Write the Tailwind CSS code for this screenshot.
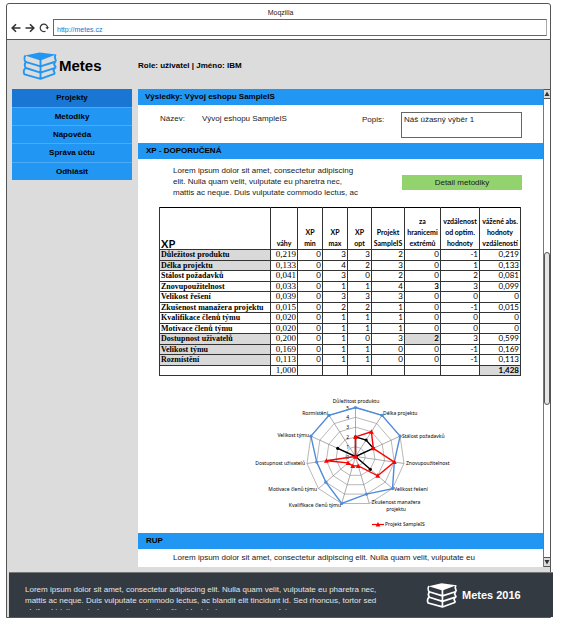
<!DOCTYPE html>
<html lang="cs">
<head>
<meta charset="utf-8">
<meta name="viewport" content="width=device-width, initial-scale=1">
<title>Metes – Výsledky</title>
<script src="https://cdn.jsdelivr.net/npm/@tailwindcss/browser@4"></script>
</head>
<body class="bg-white pl-[6px] pr-[10px] pt-[3px] font-['Liberation_Sans',sans-serif] text-[8px] leading-[11px] text-[#1a1a1a]">
<svg class="hidden" aria-hidden="true">
  <symbol id="books" viewBox="0 0 35 28">
    <path fill="currentColor" d="M2.500 3.500 17 .4 33.500 2.600 18 8.400Z"/>
    <g fill="none" stroke="currentColor" stroke-width="1.900" stroke-linejoin="round">
      <path d="M3 3.500C1.600 5 1.800 8 3 9.800L18 14.400 33.500 9.500M18 7.800V14M33 2.600 32.300 5 33.500 9.500"/>
      <path d="M4 9.800C1.800 11.500 2 14 3.400 16L18 20.600 33.500 15.600M18 14.400V20M32.300 10 31.600 12.500 33.500 15.600"/>
      <path d="M3 16C.9 17.600.9 20.800 2 22.400L18 26.800 32.500 21.600M18 20.600V26.500M32 16.200 31 18.500 32.500 21.600"/>
    </g>
  </symbol>
</svg>

<div class="rounded-t-[3px] border border-[#555] bg-[#dcdcdc]">
  <div class="rounded-t-[3px] border-b border-[#555] bg-white">
    <div class="h-[15px] pt-[3px] pl-[4px] text-center text-[7px] leading-[12px]">Moqzilla</div>
    <div class="flex items-center pr-[3px] pb-[3px]">
      <nav class="flex w-[46px] shrink-0 items-center gap-[4px] pl-[4px] text-[#333]" aria-label="Prohlížeč">
        <button type="button" aria-label="Zpět"><svg class="size-[10px]" viewBox="0 0 10 10" fill="none" stroke="currentColor" stroke-width="1.600"><path d="M9.500 5H1.200M5 1.200 1.200 5 5 8.800"/></svg></button>
        <button type="button" aria-label="Vpřed"><svg class="size-[10px]" viewBox="0 0 10 10" fill="none" stroke="currentColor" stroke-width="1.600"><path d="M.5 5H8.800M5 1.200 8.800 5 5 8.800"/></svg></button>
        <button type="button" aria-label="Obnovit"><svg class="size-[10px]" viewBox="0 0 10 10" fill="none" stroke="currentColor" stroke-width="1.200"><path d="M6.500 8.200A3.700 3.700 0 1 1 8.600 5"/><path d="M6.300 4.300H10L8.400 6.600Z" fill="currentColor" stroke="none"/></svg></button>
      </nav>
      <input type="text" aria-label="Adresa" value="http://metes.cz" class="h-[17px] min-w-0 grow border border-[#666] border-r-[#aaa] bg-white px-[3px] pt-[3px] text-[7px] text-[#1976d2] outline-none">
    </div>
  </div>

  <header class="flex h-[49px] items-center pt-[2px] pl-[15px] text-black">
    <svg class="h-[28px] w-[36px] text-[#2196f3]" aria-hidden="true"><use href="#books"/></svg>
    <h1 class="w-[80px] pl-[1px] text-[15px] leading-[18px] font-bold">Metes</h1>
    <p class="font-bold">Role: uživatel | Jméno: IBM</p>
  </header>

  <div class="flex gap-[6px] pb-[5px]">
    <nav class="ml-[5px] w-[120px] shrink-0 text-center font-bold text-black" aria-label="Hlavní">
      <a href="#" class="block h-[18px] bg-[#1976d2] leading-[18px]">Projekty</a>
      <a href="#" class="block h-[18px] border-t border-[#4dabf5] bg-[#2196f3] leading-[18px]">Metodiky</a>
      <a href="#" class="block h-[18px] border-t border-[#4dabf5] bg-[#2196f3] leading-[18px]">Nápověda</a>
      <a href="#" class="block h-[19px] border-t border-[#4dabf5] bg-[#2196f3] leading-[18px]">Správa účtu</a>
      <a href="#" class="block h-[18px] border-t border-[#4dabf5] bg-[#2196f3] leading-[18px]">Odhlásit</a>
    </nav>

    <div class="flex min-w-0 grow">
      <main class="min-w-0 grow bg-white">
        <h2 class="h-[16px] bg-[#2196f3] pl-[7px] leading-[16px] font-bold text-black"><span class="block w-[131px] overflow-hidden whitespace-nowrap">Výsledky: Vývoj eshopu SampleIS</span></h2>
        <div class="flex h-[38px] pt-[7px] pr-[21px] pl-[22px]">
          <span class="w-[42px] pt-px">Název:</span>
          <span class="grow pt-px">Vývoj eshopu SampleIS</span>
          <label for="popis" class="w-[39px] pt-[2px]">Popis:</label>
          <textarea id="popis" class="h-[26px] w-[121px] resize-none overflow-hidden border border-[#666] px-[2px] py-px outline-none">Náš úžasný výběr 1</textarea>
        </div>

        <h2 class="h-[16px] bg-[#2196f3] pl-[8px] leading-[16px] font-bold text-black">XP - DOPORUČENÁ</h2>
        <div class="flex justify-between pt-[6px] pr-[21px] pl-[35px]">
          <p class="w-[200px]">Lorem ipsum dolor sit amet, consectetur adipiscing<br>elit. Nulla quam velit, vulputate eu pharetra nec,<br>mattis ac neque. Duis vulputate commodo lectus, ac</p>
          <button type="button" class="mt-[10px] h-[15px] w-[120px] bg-[#92d36e] leading-[15px]">Detail metodiky</button>
        </div>

        <table class="mt-[9px] ml-[21px] h-[169px] w-[361px] table-fixed border-collapse border border-black text-right font-['Lato',sans-serif] text-[8px] leading-[9px] text-black [&_td]:border [&_td]:border-[#333] [&_td]:p-0 [&_td]:pr-px [&_th]:border-x [&_th]:border-[#333] [&_th]:p-0 [&_tbody_th]:border-y [&_tbody_th]:pl-px [&_tbody_th]:text-left [&_tbody_th]:font-['Liberation_Serif',serif] [&_tbody_td:nth-child(2)]:font-['Liberation_Serif',serif] [&_tbody_td:nth-child(2)]:text-[9px]">
          <colgroup><col class="w-[111px]"><col class="w-[27px]"><col class="w-[25px]"><col class="w-[25px]"><col class="w-[24px]"><col class="w-[33px]"><col class="w-[36px]"><col class="w-[39px]"><col class="w-[41px]"></colgroup>
          <thead>
            <tr class="h-[42px] border-b border-black text-center align-bottom text-[7px] leading-[11px]">
              <th class="text-left text-[11px]"><span class="pl-px">XP</span></th><th>váhy</th><th>XP<br>min</th><th>XP<br>max</th><th>XP<br>opt</th><th>Projekt<br>SampleIS</th><th>za<br>hranicemi<br>extrémů</th><th>vzdálenost<br>od optim.<br>hodnoty</th><th>vážené abs.<br>hodnoty<br>vzdáleností</th>
            </tr>
          </thead>
          <tbody>
            <tr><th class="bg-[#d9d9d9]">Důležitost produktu</th><td>0,219</td><td>0</td><td>3</td><td>3</td><td>2</td><td>0</td><td>-1</td><td>0,219</td></tr>
            <tr><th class="bg-[#d9d9d9]">Délka projektu</th><td>0,133</td><td>0</td><td>4</td><td>2</td><td>3</td><td>0</td><td>1</td><td>0,133</td></tr>
            <tr><th>Stálost požadavků</th><td>0,041</td><td>0</td><td>3</td><td>0</td><td>2</td><td>0</td><td>2</td><td>0,081</td></tr>
            <tr><th>Znovupoužitelnost</th><td>0,033</td><td>0</td><td>1</td><td>1</td><td>4</td><td class="font-bold">3</td><td>3</td><td>0,099</td></tr>
            <tr><th>Velikost řešení</th><td>0,039</td><td>0</td><td>3</td><td>3</td><td>3</td><td>0</td><td>0</td><td>0</td></tr>
            <tr><th>Zkušenost manažera projektu</th><td>0,015</td><td>0</td><td>2</td><td>2</td><td>1</td><td>0</td><td>-1</td><td>0,015</td></tr>
            <tr><th>Kvalifikace členů týmu</th><td>0,020</td><td>0</td><td>1</td><td>1</td><td>1</td><td>0</td><td>0</td><td>0</td></tr>
            <tr><th>Motivace členů týmu</th><td>0,020</td><td>0</td><td>1</td><td>1</td><td>1</td><td>0</td><td>0</td><td>0</td></tr>
            <tr><th class="bg-[#d9d9d9]">Dostupnost uživatelů</th><td>0,200</td><td>0</td><td>1</td><td>0</td><td>3</td><td class="bg-[#d9d9d9] font-bold">2</td><td>3</td><td>0,599</td></tr>
            <tr><th class="bg-[#d9d9d9]">Velikost týmu</th><td>0,169</td><td>0</td><td>1</td><td>1</td><td>0</td><td>0</td><td>-1</td><td>0,169</td></tr>
            <tr><th class="bg-[#d9d9d9]">Rozmístění</th><td>0,113</td><td>0</td><td>1</td><td>1</td><td>0</td><td>0</td><td>-1</td><td>0,113</td></tr>
            <tr class="border-t border-black"><th></th><td>1,000</td><td></td><td></td><td></td><td></td><td></td><td></td><td class="bg-[#d9d9d9] font-bold">1,428</td></tr>
          </tbody>
        </table>

        <svg id="radar" class="mt-[9px] ml-[101px] h-[148px] w-[240px]" viewBox="0 0 240 148" role="img" aria-label="Paprskový graf kritérií" fill="none"></svg>

        <h2 class="h-[16px] bg-[#2196f3] pl-[8px] leading-[16px] font-bold text-black">RUP</h2>
        <p class="h-[18px] pt-[3px] pl-[35px]">Lorem ipsum dolor sit amet, consectetur adipiscing elit. Nulla quam velit, vulputate eu</p>
      </main>

      <div class="flex w-[7px] shrink-0 flex-col border-l border-[#777] bg-white" aria-hidden="true">
        <div class="h-[10px] border-y border-[#555] bg-[#ddd]"><svg class="h-[8px] w-[6px]" viewBox="0 0 6 8"><path d="M3 1.500 5.500 6H.5Z" fill="#333"/></svg></div>
        <div class="grow-[154]"></div>
        <div class="grow-[151] rounded-[3px] border border-[#555] bg-[#e6e6e6]"></div>
        <div class="grow-[153]"></div>
        <div class="h-[10px] border-y border-[#555] bg-[#ddd]"><svg class="h-[8px] w-[6px]" viewBox="0 0 6 8"><path d="M3 6.500 5.500 2H.5Z" fill="#333"/></svg></div>
      </div>
    </div>
  </div>

  <footer class="-mr-[3px] ml-[2px] flex h-[45px] items-center border-t border-[#777] bg-[#333a42] pl-[16px] text-[#e4e4e4]">
    <p class="mt-[4px] h-[26px] w-[365px] overflow-hidden">Lorem ipsum dolor sit amet, consectetur adipiscing elit. Nulla quam velit, vulputate eu pharetra nec,<br>mattis ac neque. Duis vulputate commodo lectus, ac blandit elit tincidunt id. Sed rhoncus, tortor sed<br>eleifend tristique, tortor mauris molestie elit, et lacinia ipsum quam nec dui.</p>
    <svg class="ml-[36px] h-[25px] w-[32px] text-white" aria-hidden="true"><use href="#books"/></svg>
    <strong class="pl-[4px] text-[11px] text-white">Metes 2016</strong>
  </footer>
</div>

<script>
const svg = document.getElementById('radar');
const cx = 116.500, cy = 71.500, unit = 9.800, axes = 11;
const add = (name, attrs, text) => {
  const el = document.createElementNS('http://www.w3.org/2000/svg', name);
  for (const key in attrs) el.setAttribute(key, attrs[key]);
  if (text) el.textContent = text;
  svg.append(el);
};
const at = (i, v) => {
  const a = i * 2 * Math.PI / axes;
  return [cx + Math.sin(a) * v * unit, cy - Math.cos(a) * v * unit];
};
const ring = values => values.map((v, i) => at(i, v).join()).join(' ');
for (let level = 1; level <= 5; level++) add('polygon', {points: ring(Array(axes).fill(level)), stroke: '#999', 'stroke-width': .7});
for (let i = 0; i < axes; i++) {
  const [x, y] = at(i, 5);
  add('line', {x1: cx, y1: cy, x2: x, y2: y, stroke: '#888', 'stroke-width': .7});
}
const label = (x, y, text, anchor) => add('text', {x, y, 'text-anchor': anchor, fill: '#000', 'font-size': 5, 'font-family': 'Noto Sans, sans-serif'}, text);
for (let level = 0; level <= 5; level++) label(110, cy - level * unit + 2, String(level), 'end');
const series = [
  {color: '#4f8bdc', values: [5, 5, 5, 4, 5, 4, 5, 4, 4, 5, 5], mark: 'dot'},
  {color: '#000', values: [2, 2, 2, 0, 2, 0, 0, 0, 0, 2, 0], mark: 'dot'},
  {color: '#f00', values: [2, 3, 2, 4, 3, 1, 1, 1, 3, 0, 0], mark: 'triangle'}
];
const mark = (x, y, s) => s.mark === 'dot'
  ? add('circle', {cx: x, cy: y, r: 1.600, fill: s.color})
  : add('path', {d: `M${x} ${y - 2.400}l2.400 4.400h-4.800z`, fill: s.color});
for (const s of series) {
  add('polygon', {points: ring(s.values), stroke: s.color, 'stroke-width': 1.400});
  s.values.forEach((v, i) => mark(...at(i, v), s));
}
label(117, 18, 'Důležitost produktu', 'middle');
label(144, 30, 'Délka projektu', 'start');
label(163, 53, 'Stálost požadavků', 'start');
label(167, 80, 'Znovupoužitelnost', 'start');
label(155, 106, 'Velikost řešení', 'start');
label(157, 119, 'Zkušenost manažera', 'middle');
label(157, 126, 'projektu', 'middle');
label(102, 122, 'Kvalifikace členů týmu', 'end');
label(78, 106, 'Motivace členů týmu', 'end');
label(66, 80, 'Dostupnost uživatelů', 'end');
label(70, 52, 'Velikost týmu', 'end');
label(89, 30, 'Rozmístění', 'end');
add('line', {x1: 133, y1: 139.500, x2: 145, y2: 139.500, stroke: '#f00', 'stroke-width': 1.200});
mark(139, 139.500, series[2]);
label(146, 141, 'Projekt SampleIS', 'start');
</script>
</body>
</html>
